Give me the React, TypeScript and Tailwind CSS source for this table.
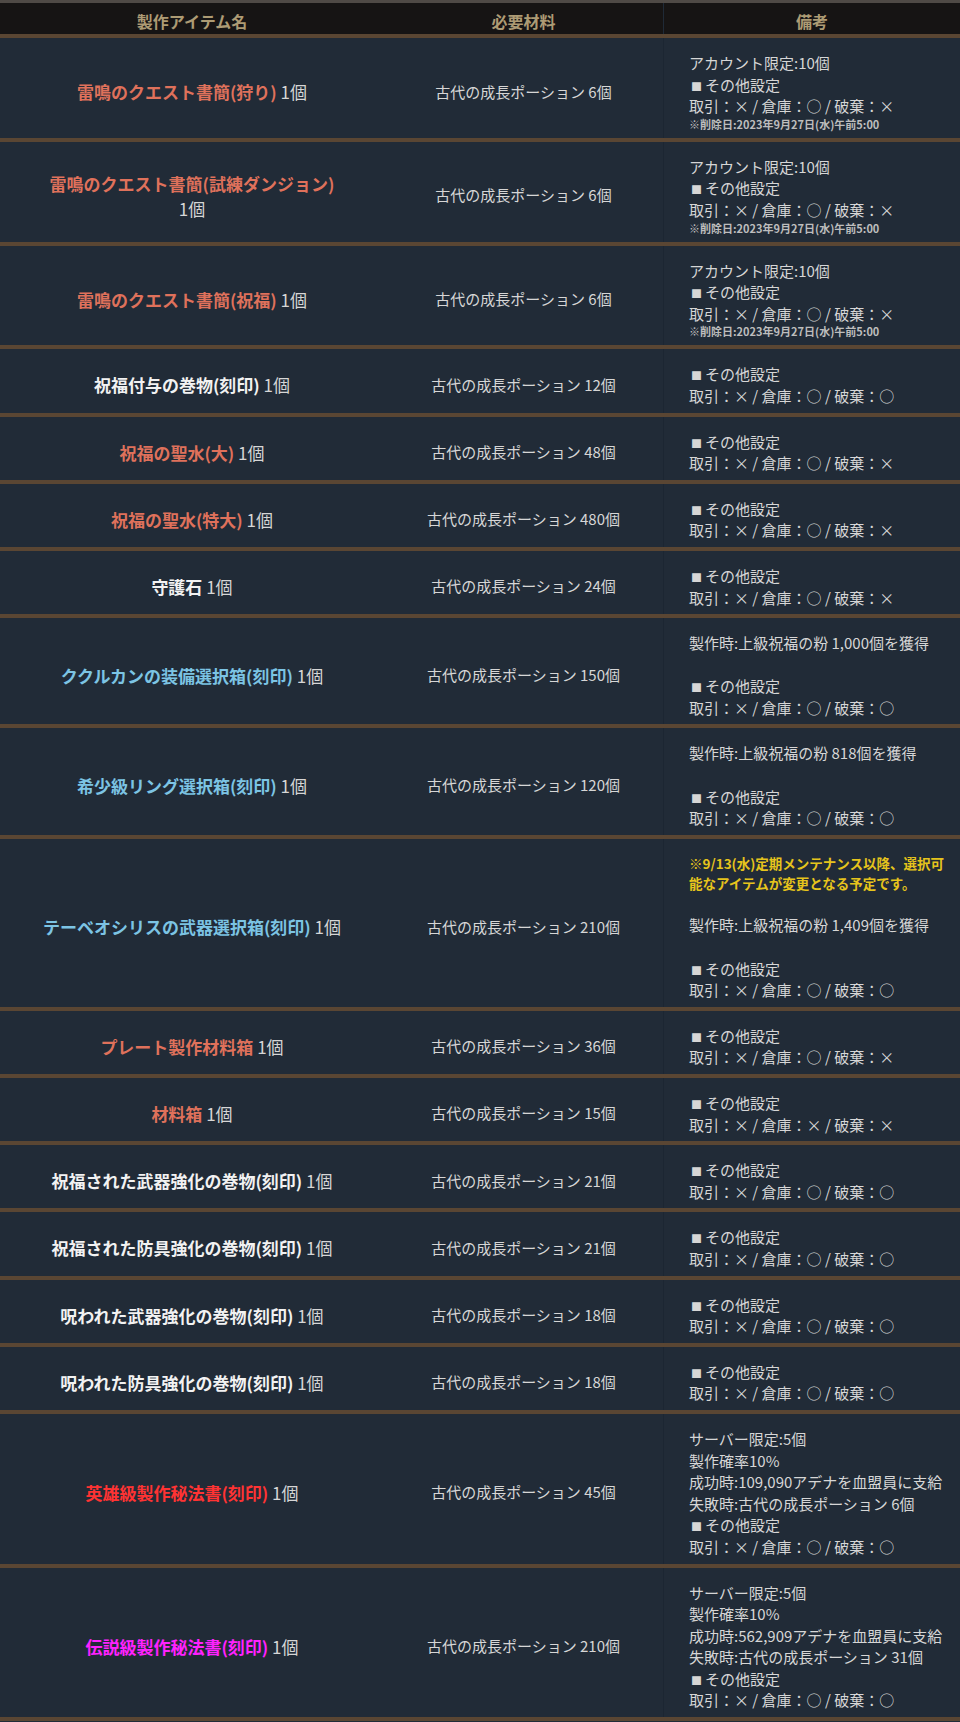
import React from 'react'

type Line = string | { small: string } | { warn: string }
type Row = { name: string; color: string; wrap?: boolean; mat: string; notes: Line[] }

const trade = (a: string, b: string, c: string) => `取引：${a} / 倉庫：${b} / 破棄：${c}`
const other = '■その他設定'
const limited: Line[] = ['アカウント限定:10個', other, trade('×', '○', '×'), { small: '※削除日:2023年9月27日(水)午前5:00' }]

const colors: Record<string, string> = {
    orange: 'text-[#df715b]',
    white: 'text-[#f2f2f2]',
    blue: 'text-[#7cc4e4]',
    red: 'text-[#ff3333]',
    magenta: 'text-[#ff22ff]',
}

const rows: Row[] = [
    { name: '雷鳴のクエスト書簡(狩り)', color: 'orange', mat: '古代の成長ポーション 6個', notes: limited },
    { name: '雷鳴のクエスト書簡(試練ダンジョン)', color: 'orange', wrap: true, mat: '古代の成長ポーション 6個', notes: limited },
    { name: '雷鳴のクエスト書簡(祝福)', color: 'orange', mat: '古代の成長ポーション 6個', notes: limited },
    { name: '祝福付与の巻物(刻印)', color: 'white', mat: '古代の成長ポーション 12個', notes: [other, trade('×', '○', '○')] },
    { name: '祝福の聖水(大)', color: 'orange', mat: '古代の成長ポーション 48個', notes: [other, trade('×', '○', '×')] },
    { name: '祝福の聖水(特大)', color: 'orange', mat: '古代の成長ポーション 480個', notes: [other, trade('×', '○', '×')] },
    { name: '守護石', color: 'white', mat: '古代の成長ポーション 24個', notes: [other, trade('×', '○', '×')] },
    {
        name: 'ククルカンの装備選択箱(刻印)', color: 'blue', mat: '古代の成長ポーション 150個',
        notes: ['製作時:上級祝福の粉 1,000個を獲得', '', other, trade('×', '○', '○')],
    },
    {
        name: '希少級リング選択箱(刻印)', color: 'blue', mat: '古代の成長ポーション 120個',
        notes: ['製作時:上級祝福の粉 818個を獲得', '', other, trade('×', '○', '○')],
    },
    {
        name: 'テーベオシリスの武器選択箱(刻印)', color: 'blue', mat: '古代の成長ポーション 210個',
        notes: [
            { warn: '※9/13(水)定期メンテナンス以降、選択可' },
            { warn: '能なアイテムが変更となる予定です。' },
            '',
            '製作時:上級祝福の粉 1,409個を獲得',
            '',
            other,
            trade('×', '○', '○'),
        ],
    },
    { name: 'プレート製作材料箱', color: 'orange', mat: '古代の成長ポーション 36個', notes: [other, trade('×', '○', '×')] },
    { name: '材料箱', color: 'orange', mat: '古代の成長ポーション 15個', notes: [other, trade('×', '×', '×')] },
    { name: '祝福された武器強化の巻物(刻印)', color: 'white', mat: '古代の成長ポーション 21個', notes: [other, trade('×', '○', '○')] },
    { name: '祝福された防具強化の巻物(刻印)', color: 'white', mat: '古代の成長ポーション 21個', notes: [other, trade('×', '○', '○')] },
    { name: '呪われた武器強化の巻物(刻印)', color: 'white', mat: '古代の成長ポーション 18個', notes: [other, trade('×', '○', '○')] },
    { name: '呪われた防具強化の巻物(刻印)', color: 'white', mat: '古代の成長ポーション 18個', notes: [other, trade('×', '○', '○')] },
    {
        name: '英雄級製作秘法書(刻印)', color: 'red', mat: '古代の成長ポーション 45個',
        notes: ['サーバー限定:5個', '製作確率10%', '成功時:109,090アデナを血盟員に支給', '失敗時:古代の成長ポーション 6個', other, trade('×', '○', '○')],
    },
    {
        name: '伝説級製作秘法書(刻印)', color: 'magenta', mat: '古代の成長ポーション 210個',
        notes: ['サーバー限定:5個', '製作確率10%', '成功時:562,909アデナを血盟員に支給', '失敗時:古代の成長ポーション 31個', other, trade('×', '○', '○')],
    },
]

function NoteLine({ line }: { line: Line }) {
    if (typeof line === 'string') {
        // small square bullet like the original font renders it
        if (line.startsWith('■')) {
            return (
                <div className="h-[21.6px] leading-[21.6px] whitespace-nowrap">
                    <span className="text-[11px] ml-[2px] mr-[3px]">■</span>
                    {line.slice(1)}
                </div>
            )
        }
        return <div className="h-[21.6px] leading-[21.6px] whitespace-nowrap">{line || '\u00a0'}</div>
    }
    if ('small' in line) {
        return <div className="text-[11px] leading-[15px] font-bold text-[#bdbdbd] whitespace-nowrap">{line.small}</div>
    }
    return <div className="text-[13.5px] leading-[20px] font-bold text-[#e6c41c] whitespace-nowrap">{line.warn}</div>
}

export default function App() {
    return (
        <div
            className="w-[960px] min-h-[1722px] bg-[#212b37] text-[#d6d6d6]"
            style={{ fontFamily: '"Noto Sans CJK JP", "Noto Sans", sans-serif' }}
        >
            {/* header */}
            <div className="grid grid-cols-[384px_279px_297px] bg-[#161414] border-t-[3px] border-[#4f4a46] border-b-4 border-b-[#5a4633] text-[16px] font-bold text-[#ad9b74]">
                <div className="pt-[8px] pb-[3px] leading-[20px] text-center">製作アイテム名</div>
                <div className="pt-[8px] pb-[3px] leading-[20px] text-center">必要材料</div>
                <div className="pt-[8px] pb-[3px] leading-[20px] text-center border-l border-[#1f2a37]">備考</div>
            </div>

            {rows.map((r, i) => (
                <div key={i} className="grid grid-cols-[384px_279px_297px] border-b-4 border-[#5a4633]">
                    <div className="flex items-center justify-center text-center pt-[14px] pb-[6px] text-[17px] leading-[25px]">
                        {r.wrap ? (
                            <div>
                                <span className={`font-bold ${colors[r.color]}`}>{r.name}</span>
                                <br />
                                <span>1個</span>
                            </div>
                        ) : (
                            <div className="whitespace-nowrap">
                                <span className={`font-bold ${colors[r.color]}`}>{r.name}</span> 1個
                            </div>
                        )}
                    </div>
                    <div className="flex items-center justify-center text-center pt-[14px] pb-[6px] text-[15px]">
                        {r.mat}
                    </div>
                    <div className="flex flex-col justify-center pl-[25px] pt-[14px] pb-[6px] text-[15px] border-l border-[#1c2632]">
                        {r.notes.map((l, j) => (
                            <NoteLine key={j} line={l} />
                        ))}
                    </div>
                </div>
            ))}
        </div>
    )
}
